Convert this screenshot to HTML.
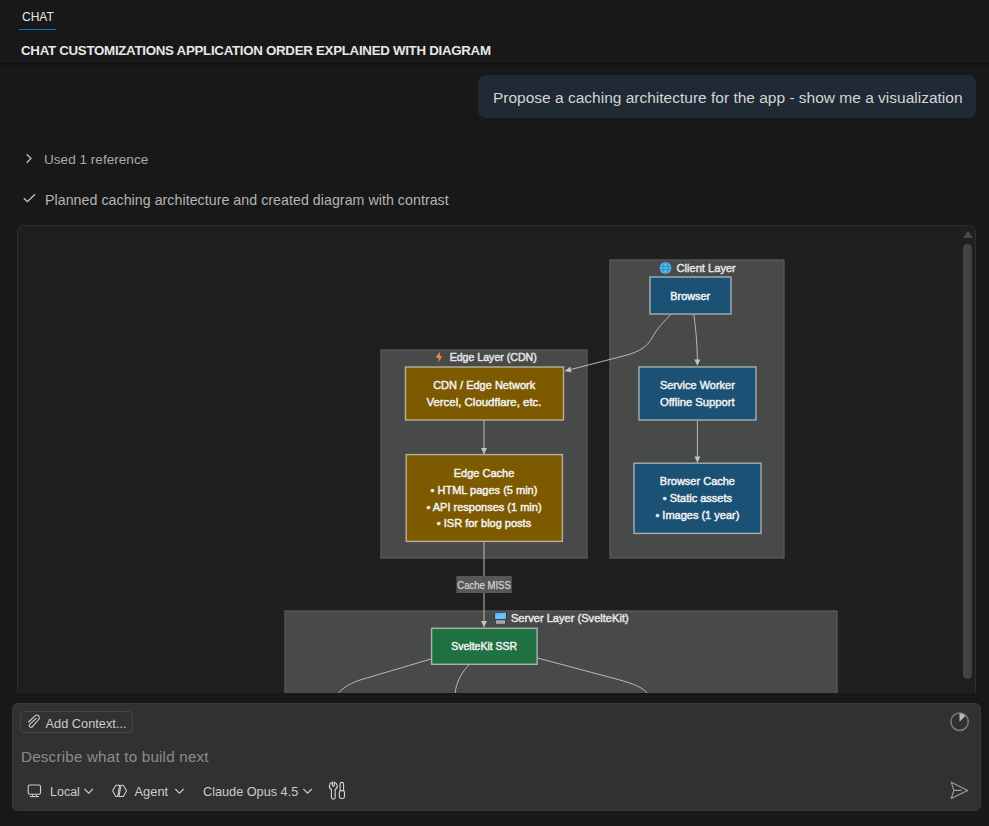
<!DOCTYPE html>
<html><head><meta charset="utf-8">
<style>
*{margin:0;padding:0;box-sizing:border-box}
html,body{width:989px;height:826px;overflow:hidden;background:#181818;font-family:"Liberation Sans",sans-serif;color:#cccccc}
.t{position:absolute;white-space:pre;line-height:20px}
#hdr{position:absolute;left:0;top:0;width:989px;height:63px;background:#181818}
#shadow{position:absolute;left:0;top:63px;width:989px;height:4px;background:linear-gradient(#0f0f0f,rgba(24,24,24,0))}
#tabline{position:absolute;left:19px;top:29px;width:37px;height:1px;background:#0078d4}
#bubble{position:absolute;left:478px;top:75px;width:498px;height:43px;border-radius:8px;background:#1f2a35}
#box{position:absolute;left:17px;top:225px;width:959px;height:520px;border:1px solid #2e2e2e;border-radius:6px;background:#1f1f1f;overflow:hidden}
#clipper{position:absolute;left:0;top:0;width:989px;height:693px;overflow:hidden}
#input{position:absolute;left:12px;top:703px;width:969px;height:108px;border:1px solid #3a3a3a;border-radius:6px;background:#313131}
#addctx{position:absolute;left:20px;top:711px;width:113px;height:22px;border:1px solid #454545;border-radius:4px}
svg{position:absolute;left:0;top:0}
</style></head><body>
<div id="hdr"></div>
<div class="t" style="left:22px;top:7px;font-size:12px;color:#e7e7e7">CHAT</div>
<div id="tabline"></div>
<div class="t" style="left:21px;top:41px;font-size:13.3px;letter-spacing:-0.285px;font-weight:700;color:#e7e7e7">CHAT CUSTOMIZATIONS APPLICATION ORDER EXPLAINED WITH DIAGRAM</div>
<div id="shadow"></div>

<div id="bubble"></div>
<div class="t" style="left:493px;top:87.5px;font-size:15.5px;color:#d4d4d4">Propose a caching architecture for the app - show me a visualization</div>

<svg width="989" height="226" style="top:0">
  <path d="M26.7 154.3 L31 158.5 L26.7 162.7" fill="none" stroke="#c4c4c4" stroke-width="1.2"/>
  <path d="M23.8 198.3 L27.4 201.7 L35 194.3" fill="none" stroke="#d0d0d0" stroke-width="1.2"/>
</svg>
<div class="t" style="left:44px;top:149.5px;font-size:13.6px;color:#a8a8a8">Used 1 reference</div>
<div class="t" style="left:45px;top:190px;font-size:14.2px;letter-spacing:0.05px;color:#b4b4b4">Planned caching architecture and created diagram with contrast</div>

<div id="clipper">
<div id="box"></div>
<svg width="989" height="693" viewBox="0 0 989 693">
  <defs>
    <marker id="ah" viewBox="0 0 10 10" refX="10" refY="5" markerWidth="6.5" markerHeight="6" orient="auto-start-reverse" markerUnits="userSpaceOnUse">
      <path d="M0 0 L10 5 L0 10 z" fill="#c4c4c4"/>
    </marker>
  </defs>
  <!-- scrollbar -->
  <path d="M963 238 L968 231 L973 238 z" fill="#4a4a4a"/>
  <rect x="963" y="244" width="9" height="435" rx="4.5" fill="#434343"/>

  <!-- clusters -->
  <rect x="610" y="260" width="174" height="298" fill="#484a49" stroke="#5a5b5a" stroke-width="1.3"/>
  <rect x="381" y="350" width="206" height="208" fill="#484a49" stroke="#5a5b5a" stroke-width="1.3"/>
  <rect x="285" y="611" width="552" height="120" fill="#484a49" stroke="#5a5b5a" stroke-width="1.3"/>

  <!-- edges -->
  <g fill="none" stroke="#b8b8b8" stroke-width="1">
    <path d="M670.7 314.7 C663 322 657 329 652.5 337 C648 346 640 351.5 626 355.3 L565 371" marker-end="url(#ah)"/>
    <path d="M693.8 314.7 C696 330 697.4 345 697.4 365.5" marker-end="url(#ah)"/>
    <path d="M697.4 421 L697.4 462.5" marker-end="url(#ah)"/>
    <path d="M484 420.5 L484 454" marker-end="url(#ah)"/>
    <path d="M484 542 L484 627" marker-end="url(#ah)"/>
    <path d="M431 659 L360 680 C348 684 340 690 338 694"/>
    <path d="M469 665 C462 672 456 682 455 694"/>
    <path d="M537.5 658 L620 680 C634 684 644 688 648 694"/>
  </g>

  <!-- edge label -->
  <rect x="456.4" y="576" width="55.4" height="17" fill="#575757"/>
  <text x="457.3" y="589.1" font-size="11.4" fill="#d4d4d4" stroke="#d4d4d4" stroke-width="0.25" font-family="Liberation Sans" textLength="53.5" lengthAdjust="spacingAndGlyphs">Cache MISS</text>

  <!-- nodes -->
  <g stroke="rgba(235,235,235,0.62)" stroke-width="1.4">
    <rect x="650" y="277" width="81" height="37" fill="#1a5174"/>
    <rect x="639" y="367" width="117" height="53" fill="#1a5174"/>
    <rect x="634" y="463.2" width="127" height="70.2" fill="#1a5174"/>
    <rect x="405.5" y="367" width="158" height="53" fill="#7d5a00"/>
    <rect x="406.2" y="454.6" width="156.2" height="86.8" fill="#7d5a00"/>
    <rect x="431.6" y="628.3" width="105.5" height="36" fill="#1f7042"/>
  </g>

  <g font-family="Liberation Sans" font-weight="400" fill="#f2f2f2" stroke="#f2f2f2" stroke-width="0.45" text-anchor="middle">
    <text x="706.2" y="272" font-size="11.1" fill="#e6e6e6" stroke="#e6e6e6">Client Layer</text>
    <text x="690.2" y="300.2" font-size="10.85">Browser</text>
    <text x="697.4" y="389.3" font-size="11">Service Worker</text>
    <text x="697.3" y="405.6" font-size="11.25">Offline Support</text>
    <text x="697.4" y="485.2" font-size="11">Browser Cache</text>
    <text x="697.4" y="502" font-size="11">• Static assets</text>
    <text x="697.4" y="519" font-size="11">• Images (1 year)</text>

    <text x="493.2" y="361.4" font-size="10.6" fill="#e6e6e6" stroke="#e6e6e6">Edge Layer (CDN)</text>
    <text x="484.2" y="389.3" font-size="11">CDN / Edge Network</text>
    <text x="484" y="405.6" font-size="11.45">Vercel, Cloudflare, etc.</text>
    <text x="484" y="477" font-size="11">Edge Cache</text>
    <text x="484" y="494" font-size="11">• HTML pages (5 min)</text>
    <text x="484" y="510.8" font-size="11">• API responses (1 min)</text>
    <text x="484" y="527.2" font-size="11">• ISR for blog posts</text>

    <text x="569.8" y="621.6" font-size="11.1" fill="#e6e6e6" stroke="#e6e6e6">Server Layer (SvelteKit)</text>
    <text x="484.2" y="650" font-size="10.5">SvelteKit SSR</text>
  </g>

  <!-- cluster icons -->
  <defs>
    <linearGradient id="bolt" x1="0" y1="0" x2="0" y2="1"><stop offset="0" stop-color="#ffb84a"/><stop offset="0.55" stop-color="#ff8a3d"/><stop offset="1" stop-color="#f2455a"/></linearGradient>
    <linearGradient id="scr" x1="0" y1="0" x2="1" y2="1"><stop offset="0" stop-color="#3aa8ee"/><stop offset="0.5" stop-color="#6cc6f5"/><stop offset="1" stop-color="#48c0f8"/></linearGradient>
  </defs>
  <g>
    <circle cx="665.5" cy="268" r="5.9" fill="#4cb9f2"/>
    <g stroke="#2a6f9e" stroke-width="0.7" fill="none" opacity="0.8">
      <ellipse cx="665.5" cy="268" rx="2.6" ry="5.8"/>
      <path d="M660 266.5 H671 M660 269.5 H671"/>
    </g>
    <path d="M439.8 351.8 L435.8 357.8 H438.8 L438.2 363 L442.2 356.3 H439.5 Z" fill="url(#bolt)"/>
    <rect x="494.5" y="612.3" width="12" height="7" fill="#2a2222"/>
    <rect x="495" y="612.7" width="11" height="6.3" fill="url(#scr)"/>
    <rect x="496" y="620.2" width="9" height="3.6" fill="#a8a4b0"/>
  </g>
</svg>
</div>

<div id="input"></div>
<div id="addctx"></div>
<svg width="989" height="826" style="pointer-events:none">
  <!-- paperclip -->
  <path d="M28.6 722 L35 715.9 A2.5 2.5 0 0 1 38.6 719.5 L32.4 726.7 A1.75 1.75 0 0 1 29.7 724.4 L36.2 718.3" fill="none" stroke="#d0d0d0" stroke-width="1.1" stroke-linecap="round"/>
  <!-- circle pie -->
  <circle cx="959.6" cy="721.7" r="8.7" fill="none" stroke="#7c7c7c" stroke-width="1.5"/>
  <path d="M959.5 721.8 L959.5 713.6 A8 8 0 0 1 965.3 716 z" fill="#bababa"/>
  <!-- send -->
  <path d="M951.3 782.3 L967.6 790.4 L951.3 798.4 L953.9 790.4 z M953.9 790.4 H961.7" fill="none" stroke="#a0a0a0" stroke-width="1.1" stroke-linejoin="round"/>
  <!-- monitor -->
  <rect x="28.2" y="785" width="12.3" height="9.3" rx="1.6" fill="none" stroke="#d0d0d0" stroke-width="1.1"/>
  <path d="M29.8 796.6 H39 M32.6 794.3 V796.6 M36.3 794.3 V796.6" stroke="#d0d0d0" stroke-width="1"/>
  <path d="M84.5 789 L88.7 793.2 L92.9 789" fill="none" stroke="#cccccc" stroke-width="1.1"/>
  <!-- agent -->
  <path d="M119.6 785.3 H115.8 L112.6 790.8 L115.8 796.4 H117.7 Z M120.9 785.3 H123.3 L126.5 790.8 L123.3 796.4 H119 Z" fill="none" stroke="#d0d0d0" stroke-width="1.05" stroke-linejoin="round"/>
  <path d="M175.3 789 L179.5 793.2 L183.7 789" fill="none" stroke="#cccccc" stroke-width="1.1"/>
  <path d="M303.4 789 L307.6 793.2 L311.8 789" fill="none" stroke="#cccccc" stroke-width="1.1"/>
  <!-- tools -->
  <path d="M332.4 785.4 V782.2 A3.9 3.9 0 0 0 331.4 789.4 V797.3 A1.9 1.9 0 0 0 335.2 797.3 V789.4 A3.9 3.9 0 0 0 334.2 782.2 V785.4 A0.9 0.9 0 0 1 332.4 785.4 Z" fill="none" stroke="#d8d8d8" stroke-width="1.1"/>
  <path d="M340.1 790.6 V784.1 A1.75 1.75 0 0 1 343.6 784.1 V790.6" fill="none" stroke="#d8d8d8" stroke-width="1.1"/>
  <rect x="339.3" y="790.6" width="5.2" height="7.9" rx="1.9" fill="none" stroke="#d8d8d8" stroke-width="1.1"/>
</svg>
<div class="t" style="left:45.5px;top:714px;font-size:12.8px;color:#cccccc">Add Context...</div>
<div class="t" style="left:21px;top:746.5px;font-size:15.2px;letter-spacing:0.2px;color:#8c8c8c">Describe what to build next</div>
<div class="t" style="left:50px;top:782px;font-size:12.5px;color:#cccccc">Local</div>
<div class="t" style="left:134.5px;top:782px;font-size:12.9px;color:#cccccc">Agent</div>
<div class="t" style="left:203px;top:782px;font-size:12.7px;color:#cccccc">Claude Opus 4.5</div>
</body></html>
